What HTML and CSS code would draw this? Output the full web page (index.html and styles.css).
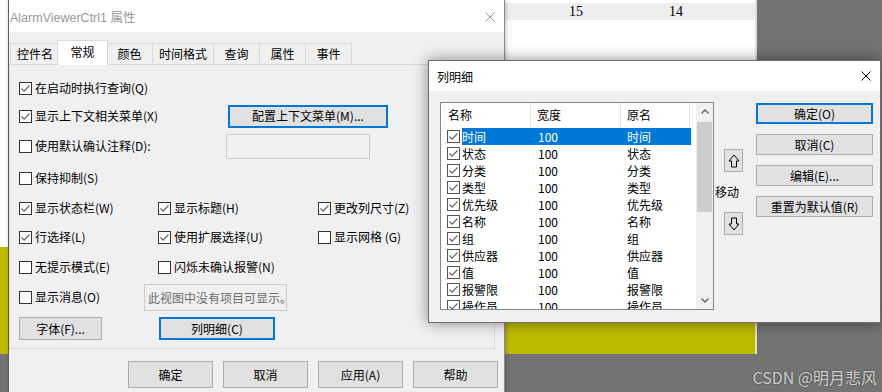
FILE: index.html
```html
<!DOCTYPE html>
<html lang="zh-CN">
<head>
    <meta charset="UTF-8">
    <meta name="viewport" content="width=device-width, initial-scale=1.0">
    <title>AlarmViewerCtrl1 属性</title>
    <link rel="stylesheet" href="styles.css">
</head>
<body>
<div class="desk">

    <!-- application behind the dialogs -->
    <div class="app">
        <div class="app-row">
            <span class="cell c-a">15</span>
            <span class="cell c-b">14</span>
        </div>
        <div class="app-fill"></div>
        <div class="app-yellow"></div>
        <div class="app-yellow-left"></div>
    </div>

    <!-- property sheet -->
    <div class="dlg props">
        <div class="titlebar">
            <span class="title">AlarmViewerCtrl1 属性</span>
            <svg class="close close-dim" viewBox="0 0 10 10"><path d="M0.5 0.5L9.5 9.5M9.5 0.5L0.5 9.5"/></svg>
        </div>
        <div class="props-body">
            <div class="tabs">
                <span class="tab">控件名</span>
                <span class="tab active">常规</span>
                <span class="tab">颜色</span>
                <span class="tab">时间格式</span>
                <span class="tab">查询</span>
                <span class="tab">属性</span>
                <span class="tab">事件</span>
            </div>
            <div class="panel">
                <div class="row">
                    <label class="chk"><span class="box"><svg viewBox="0 0 11 11"><path d="M1.5 5.5l2.6 2.6 5.4-5.6"/></svg></span>在启动时执行查询(Q)</label>
                </div>
                <div class="row">
                    <div class="cell w209"><label class="chk"><span class="box"><svg viewBox="0 0 11 11"><path d="M1.5 5.5l2.6 2.6 5.4-5.6"/></svg></span>显示上下文相关菜单(X)</label></div>
                    <button class="btn btn-default btn-menu">配置上下文菜单(M)...</button>
                </div>
                <div class="row">
                    <div class="cell w207"><label class="chk"><span class="box"></span>使用默认确认注释(D):</label></div>
                    <span class="field"></span>
                </div>
                <div class="row">
                    <label class="chk"><span class="box"></span>保持抑制(S)</label>
                </div>
                <div class="row">
                    <div class="cell w139"><label class="chk"><span class="box"><svg viewBox="0 0 11 11"><path d="M1.5 5.5l2.6 2.6 5.4-5.6"/></svg></span>显示状态栏(W)</label></div>
                    <div class="cell w160"><label class="chk"><span class="box"><svg viewBox="0 0 11 11"><path d="M1.5 5.5l2.6 2.6 5.4-5.6"/></svg></span>显示标题(H)</label></div>
                    <label class="chk"><span class="box"><svg viewBox="0 0 11 11"><path d="M1.5 5.5l2.6 2.6 5.4-5.6"/></svg></span>更改列尺寸(Z)</label>
                </div>
                <div class="row">
                    <div class="cell w139"><label class="chk"><span class="box"><svg viewBox="0 0 11 11"><path d="M1.5 5.5l2.6 2.6 5.4-5.6"/></svg></span>行选择(L)</label></div>
                    <div class="cell w160"><label class="chk"><span class="box"><svg viewBox="0 0 11 11"><path d="M1.5 5.5l2.6 2.6 5.4-5.6"/></svg></span>使用扩展选择(U)</label></div>
                    <label class="chk"><span class="box"></span>显示网格 (G)</label>
                </div>
                <div class="row">
                    <div class="cell w139"><label class="chk"><span class="box"></span>无提示模式(E)</label></div>
                    <label class="chk"><span class="box"></span>闪烁未确认报警(N)</label>
                </div>
                <div class="row">
                    <div class="cell w125"><label class="chk"><span class="box"></span>显示消息(O)</label></div>
                    <span class="msgbox">此视图中没有项目可显示。</span>
                </div>
                <div class="row">
                    <div class="cell w140"><button class="btn btn-font">字体(F)...</button></div>
                    <button class="btn btn-default btn-cols">列明细(C)</button>
                </div>
            </div>
            <div class="footer">
                <button class="btn btn-foot">确定</button>
                <button class="btn btn-foot">取消</button>
                <button class="btn btn-foot">应用(A)</button>
                <button class="btn btn-foot">帮助</button>
            </div>
        </div>
    </div>

    <!-- column details dialog -->
    <div class="dlg cols">
        <div class="titlebar">
            <span class="title">列明细</span>
            <svg class="close" viewBox="0 0 10 10"><path d="M0.5 0.5L9.5 9.5M9.5 0.5L0.5 9.5"/></svg>
        </div>
        <div class="cols-body">
            <div class="list">
                <div class="list-main">
                    <div class="list-head">
                        <span class="hc hc1">名称</span>
                        <span class="hc hc2">宽度</span>
                        <span class="hc hc3">原名</span>
                    </div>
                    <div class="item sel"><span class="box"><svg viewBox="0 0 11 11"><path d="M1.5 5.5l2.6 2.6 5.4-5.6"/></svg></span><span class="item-text"><span class="t1">时间</span><span class="t2">100</span><span class="t3">时间</span></span></div>
                    <div class="item"><span class="box"><svg viewBox="0 0 11 11"><path d="M1.5 5.5l2.6 2.6 5.4-5.6"/></svg></span><span class="item-text"><span class="t1">状态</span><span class="t2">100</span><span class="t3">状态</span></span></div>
                    <div class="item"><span class="box"><svg viewBox="0 0 11 11"><path d="M1.5 5.5l2.6 2.6 5.4-5.6"/></svg></span><span class="item-text"><span class="t1">分类</span><span class="t2">100</span><span class="t3">分类</span></span></div>
                    <div class="item"><span class="box"><svg viewBox="0 0 11 11"><path d="M1.5 5.5l2.6 2.6 5.4-5.6"/></svg></span><span class="item-text"><span class="t1">类型</span><span class="t2">100</span><span class="t3">类型</span></span></div>
                    <div class="item"><span class="box"><svg viewBox="0 0 11 11"><path d="M1.5 5.5l2.6 2.6 5.4-5.6"/></svg></span><span class="item-text"><span class="t1">优先级</span><span class="t2">100</span><span class="t3">优先级</span></span></div>
                    <div class="item"><span class="box"><svg viewBox="0 0 11 11"><path d="M1.5 5.5l2.6 2.6 5.4-5.6"/></svg></span><span class="item-text"><span class="t1">名称</span><span class="t2">100</span><span class="t3">名称</span></span></div>
                    <div class="item"><span class="box"><svg viewBox="0 0 11 11"><path d="M1.5 5.5l2.6 2.6 5.4-5.6"/></svg></span><span class="item-text"><span class="t1">组</span><span class="t2">100</span><span class="t3">组</span></span></div>
                    <div class="item"><span class="box"><svg viewBox="0 0 11 11"><path d="M1.5 5.5l2.6 2.6 5.4-5.6"/></svg></span><span class="item-text"><span class="t1">供应器</span><span class="t2">100</span><span class="t3">供应器</span></span></div>
                    <div class="item"><span class="box"><svg viewBox="0 0 11 11"><path d="M1.5 5.5l2.6 2.6 5.4-5.6"/></svg></span><span class="item-text"><span class="t1">值</span><span class="t2">100</span><span class="t3">值</span></span></div>
                    <div class="item"><span class="box"><svg viewBox="0 0 11 11"><path d="M1.5 5.5l2.6 2.6 5.4-5.6"/></svg></span><span class="item-text"><span class="t1">报警限</span><span class="t2">100</span><span class="t3">报警限</span></span></div>
                    <div class="item"><span class="box"><svg viewBox="0 0 11 11"><path d="M1.5 5.5l2.6 2.6 5.4-5.6"/></svg></span><span class="item-text"><span class="t1">操作员</span><span class="t2">100</span><span class="t3">操作员</span></span></div>
                </div>
                <div class="vscroll">
                    <span class="sb-btn"><svg viewBox="0 0 8 5"><path d="M0.5 4.5L4 1l3.5 3.5"/></svg></span>
                    <span class="sb-track"><span class="sb-thumb"></span></span>
                    <span class="sb-btn"><svg viewBox="0 0 8 5"><path d="M0.5 0.5L4 4l3.5-3.5"/></svg></span>
                </div>
            </div>
            <div class="move">
                <button class="btn arrow-btn"><svg viewBox="0 0 12 14"><path d="M6 1L11 7H8.5V13H3.5V7H1Z"/></svg></button>
                <span class="move-label">移动</span>
                <button class="btn arrow-btn"><svg viewBox="0 0 12 14"><path d="M6 13L11 7H8.5V1H3.5V7H1Z"/></svg></button>
            </div>
            <div class="side-btns">
                <button class="btn btn-default btn-side">确定(O)</button>
                <button class="btn btn-side">取消(C)</button>
                <button class="btn btn-side">编辑(E)...</button>
                <button class="btn btn-side">重置为默认值(R)</button>
            </div>
        </div>
    </div>

    <div class="watermark">CSDN @明月悲风</div>
</div>
</body>
</html>
```

FILE: styles.css
```css
* {
    margin: 0;
    padding: 0;
    box-sizing: border-box;
}

body {
    width: 882px;
    height: 392px;
    overflow: hidden;
    background: #737373;
    font-family: "Noto Sans CJK SC", "Noto Sans", sans-serif;
    font-size: 12px;
    color: #000;
}

.desk {
    position: relative;
    width: 882px;
    height: 392px;
    overflow: hidden;
}

/* ---------- application behind ---------- */

.app {
    position: absolute;
    left: 0;
    top: 0;
    width: 757px;
    height: 354px;
    display: flex;
    flex-direction: column;
    background: #fff;
    border-right: 2px solid #dedede;
}

.app-row {
    display: flex;
    margin-top: 3px;
    margin-left: 505px;
    height: 17px;
    background: #eeeeee;
    font-family: "Liberation Serif", serif;
    font-size: 14px;
    line-height: 17px;
}

.app-row .cell {
    text-align: right;
    padding-right: 7px;
}

.c-a { width: 85px; }
.c-b { width: 100px; }

.app-fill {
    flex: 1;
}

.app-yellow {
    height: 32px;
    background: #bdbb00;
}

.app-yellow-left {
    position: absolute;
    left: 0;
    top: 247px;
    width: 8px;
    height: 105px;
    background: #bdbb00;
}

/* ---------- dialogs ---------- */

.dlg {
    position: absolute;
    background: #f0f0f0;
}

.titlebar {
    display: flex;
    align-items: center;
    justify-content: space-between;
    background: #fff;
}

.close {
    width: 10px;
    height: 10px;
    fill: none;
    stroke: #000;
    stroke-width: 1;
}

.close-dim {
    stroke: #9a9a9a;
}

.props {
    left: 8px;
    top: 0;
    width: 497px;
    height: 400px;
    border-left: 1px solid #5e5e5e;
    border-right: 1px solid #8c8c8c;
    box-shadow: 1px 0 4px rgba(0, 0, 0, 0.25);
}

.props .titlebar {
    height: 32px;
    padding: 1px 9px 0 1px;
}

.props .title {
    font-family: "Liberation Sans", "Noto Sans CJK SC", sans-serif;
    font-size: 12.5px;
    color: #999;
}

.props-body {
    padding-top: 8px;
}

.tabs {
    position: relative;
    z-index: 1;
    display: flex;
    align-items: flex-end;
    height: 25px;
    padding-left: 1px;
}

.tab {
    height: 21px;
    min-width: 47px;
    margin-bottom: 1px;
    margin-right: -1px;
    padding: 0 6px;
    border: 1px solid #d9d9d9;
    border-bottom: none;
    background: #f0f0f0;
    text-align: center;
    line-height: 19px;
}

.tab.active {
    height: 25px;
    min-width: 51px;
    margin: 0 -2px 0 -2px;
    position: relative;
    background: #fff;
    line-height: 21px;
}

.panel {
    width: 486px;
    height: 285px;
    margin-top: -1px;
    padding: 9px 0 0 9px;
    border: 1px solid #d9d9d9;
    display: grid;
    grid-template-rows: 28px 28px 32px 32px 28px 30px 30px 30px 33px;
}

.row {
    display: flex;
    align-items: center;
}

.cell {
    flex: none;
}

.w125 { width: 125px; }
.w139 { width: 139px; }
.w140 { width: 140px; }
.w160 { width: 160px; }
.w207 { width: 207px; }
.w209 { width: 209px; }

.chk {
    display: flex;
    align-items: center;
    gap: 3px;
    line-height: 16px;
    white-space: nowrap;
}

.box {
    flex: none;
    display: block;
    width: 13px;
    height: 13px;
    border: 1px solid #333;
    background: #fff;
}

.box svg {
    display: block;
    width: 11px;
    height: 11px;
    fill: none;
    stroke: #606060;
    stroke-width: 1.1;
}

.btn {
    font-family: inherit;
    font-size: 12px;
    color: #000;
    background: #e1e1e1;
    border: 1px solid #adadad;
    line-height: 14px;
}

.btn-default {
    border: 2px solid #0078d7;
}

.btn-menu {
    width: 160px;
    height: 23px;
}

.field {
    width: 144px;
    height: 25px;
    border: 1px solid #cccccc;
    background: #f0f0f0;
}

.msgbox {
    width: 143px;
    height: 27px;
    padding-left: 3px;
    border: 1px solid #cccccc;
    background: #f0f0f0;
    color: #6d6d6d;
    line-height: 25px;
    white-space: nowrap;
}

.btn-font {
    width: 83px;
    height: 23px;
}

.btn-cols {
    width: 116px;
    height: 23px;
}

.footer {
    display: flex;
    justify-content: flex-end;
    gap: 10px;
    margin-top: 12px;
    padding-right: 6px;
}

.btn-foot {
    width: 85px;
    height: 27px;
}

/* ---------- column dialog ---------- */

.cols {
    left: 428px;
    top: 60px;
    width: 453px;
    height: 263px;
    border: 1px solid #6e6e6e;
    box-shadow: 0 0 14px rgba(0, 0, 0, 0.45);
}

.cols .titlebar {
    height: 30px;
    padding: 0 9px 0 8px;
}

.cols-body {
    display: flex;
    padding: 11px 0 0 11px;
}

.list {
    display: flex;
    width: 274px;
    height: 208px;
    border: 1px solid #828790;
    background: #fff;
}

.list-main {
    flex: 1;
    overflow: hidden;
}

.list-head {
    display: flex;
    height: 25px;
    line-height: 24px;
}

.hc {
    border-right: 1px solid #e5e5e5;
}

.hc1 { width: 90px; padding-left: 7px; }
.hc2 { width: 90px; padding-left: 6px; }
.hc3 { width: 69px; padding-left: 6px; }

.item {
    display: flex;
    align-items: center;
    height: 17px;
}

.item .box {
    margin: 0 2px 0 6px;
    border-color: #555;
}

.item-text {
    display: flex;
    width: 229px;
    height: 17px;
    line-height: 17px;
}

.item.sel .item-text {
    background: #0078d7;
    color: #fff;
}

.t1 { width: 69px; }
.t2 { width: 90px; padding-left: 7px; }
.t3 { padding-left: 6px; }

.vscroll {
    display: flex;
    flex-direction: column;
    width: 17px;
    background: #f0f0f0;
}

.sb-btn {
    display: flex;
    align-items: center;
    justify-content: center;
    height: 17px;
}

.sb-btn svg {
    width: 8px;
    height: 5px;
    fill: none;
    stroke: #606060;
    stroke-width: 1.4;
}

.sb-track {
    flex: 1;
    padding: 2px 1px 0 1px;
}

.sb-thumb {
    display: block;
    height: 90px;
    background: #cdcdcd;
}

.move {
    display: flex;
    flex-direction: column;
    width: 42px;
    padding-top: 47px;
}

.arrow-btn {
    display: flex;
    align-items: center;
    justify-content: center;
    width: 19px;
    height: 23px;
    margin-left: 10px;
}

.arrow-btn svg {
    width: 12px;
    height: 14px;
    fill: none;
    stroke: #000;
    stroke-width: 1;
}

.move-label {
    height: 40px;
    padding-left: 1px;
    line-height: 40px;
}

.side-btns {
    display: flex;
    flex-direction: column;
    gap: 10px;
    padding-top: 1px;
}

.btn-side {
    width: 117px;
    height: 21px;
}

/* ---------- watermark ---------- */

.watermark {
    position: absolute;
    right: 5px;
    bottom: 6px;
    font-size: 16px;
    color: #cfcfcf;
    text-shadow: 0 0 2px rgba(0, 0, 0, 0.5);
    line-height: 18px;
}
```
